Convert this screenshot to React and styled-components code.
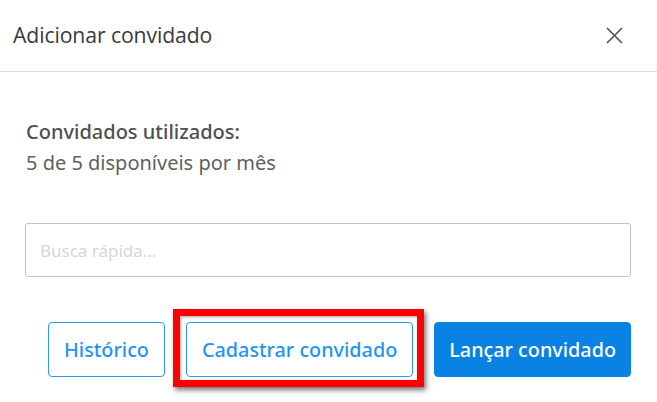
import React from "react";
import styled, { createGlobalStyle } from "styled-components";

const Global = createGlobalStyle`
  html, body { margin: 0; padding: 0; background: #fff; }
  * { box-sizing: border-box; }
`;

const Modal = styled.div`
  width: 657px;
  height: 402px;
  background: #fff;
  font-family: "Noto Sans", "Open Sans", sans-serif;
  overflow: hidden;
`;

const Header = styled.div`
  height: 72px;
  border-bottom: 1px solid #dcdcdc;
  display: flex;
  align-items: center;
  justify-content: space-between;
  padding: 0 34px 0 13px;
`;

const Title = styled.h2`
  margin: 0;
  font-family: "Open Sans", "Noto Sans", sans-serif;
  font-weight: 400;
  font-size: 21.2px;
  color: #3a3a3a;
  letter-spacing: -0.1px;
  margin-top: -3px;
`;

const Close = styled.button`
  border: 0;
  background: none;
  padding: 0;
  width: 17px;
  height: 17px;
  display: flex;
  cursor: pointer;
  margin-top: -1px;
`;

const Body = styled.div`
  padding: 0 26px 0 25px;
`;

const Info = styled.div`
  padding-top: 44px;
  padding-left: 1px;
  font-size: 20px;
  line-height: 31px;
`;

const InfoLabel = styled.div`
  font-weight: 500;
  color: #4f4f4f;
`;

const InfoValue = styled.div`
  color: #5f5f5f;
`;

const Search = styled.input`
  display: block;
  margin-top: 45px;
  width: 100%;
  height: 54px;
  border: 1px solid #c3c3cc;
  border-radius: 3px;
  padding: 0 14px;
  font-family: "Noto Sans", sans-serif;
  font-size: 17px;
  outline: none;
  &::placeholder { color: #d6d6dc; }
`;

const Actions = styled.div`
  margin-top: 45px;
  display: flex;
  justify-content: flex-end;
  gap: 21px;
`;

const Button = styled.button`
  position: relative;
  height: 55px;
  padding: 0 ${(p) => p.$px || 15}px;
  border-radius: 4px;
  font-family: "Noto Sans", sans-serif;
  font-size: 19.8px;
  font-weight: 500;
  cursor: pointer;
  border: 1px solid ${(p) => (p.$primary ? "#0a82e4" : "#2a9af5")};
  background: ${(p) => (p.$primary ? "#0a82e4" : "#fff")};
  color: ${(p) => (p.$primary ? "#fff" : "#1f95f2")};
  white-space: nowrap;
`;

const Highlight = styled.span`
  position: absolute;
  left: -14px;
  right: -12px;
  top: -14px;
  bottom: -11px;
  border: 7px solid #ff0000;
  box-shadow: 2px 3px 5px rgba(0, 0, 0, 0.55), inset 1px 1px 3px rgba(0, 0, 0, 0.35);
  pointer-events: none;
`;

export default function App() {
  return (
    <>
      <Global />
      <Modal>
        <Header>
          <Title>Adicionar convidado</Title>
          <Close aria-label="Fechar">
            <svg width="17" height="17" viewBox="0 0 17 17">
              <path d="M1.5 1.5 L15.5 15.5 M15.5 1.5 L1.5 15.5" stroke="#555" strokeWidth="1.7" strokeLinecap="round" />
            </svg>
          </Close>
        </Header>
        <Body>
          <Info>
            <InfoLabel>Convidados utilizados:</InfoLabel>
            <InfoValue>5 de 5 disponíveis por mês</InfoValue>
          </Info>
          <Search placeholder="Busca rápida..." />
          <Actions>
            <Button $px={15}>Histórico</Button>
            <Button $px={15}>
              Cadastrar convidado
              <Highlight />
            </Button>
            <Button $primary $px={14}>Lançar convidado</Button>
          </Actions>
        </Body>
      </Modal>
    </>
  );
}
